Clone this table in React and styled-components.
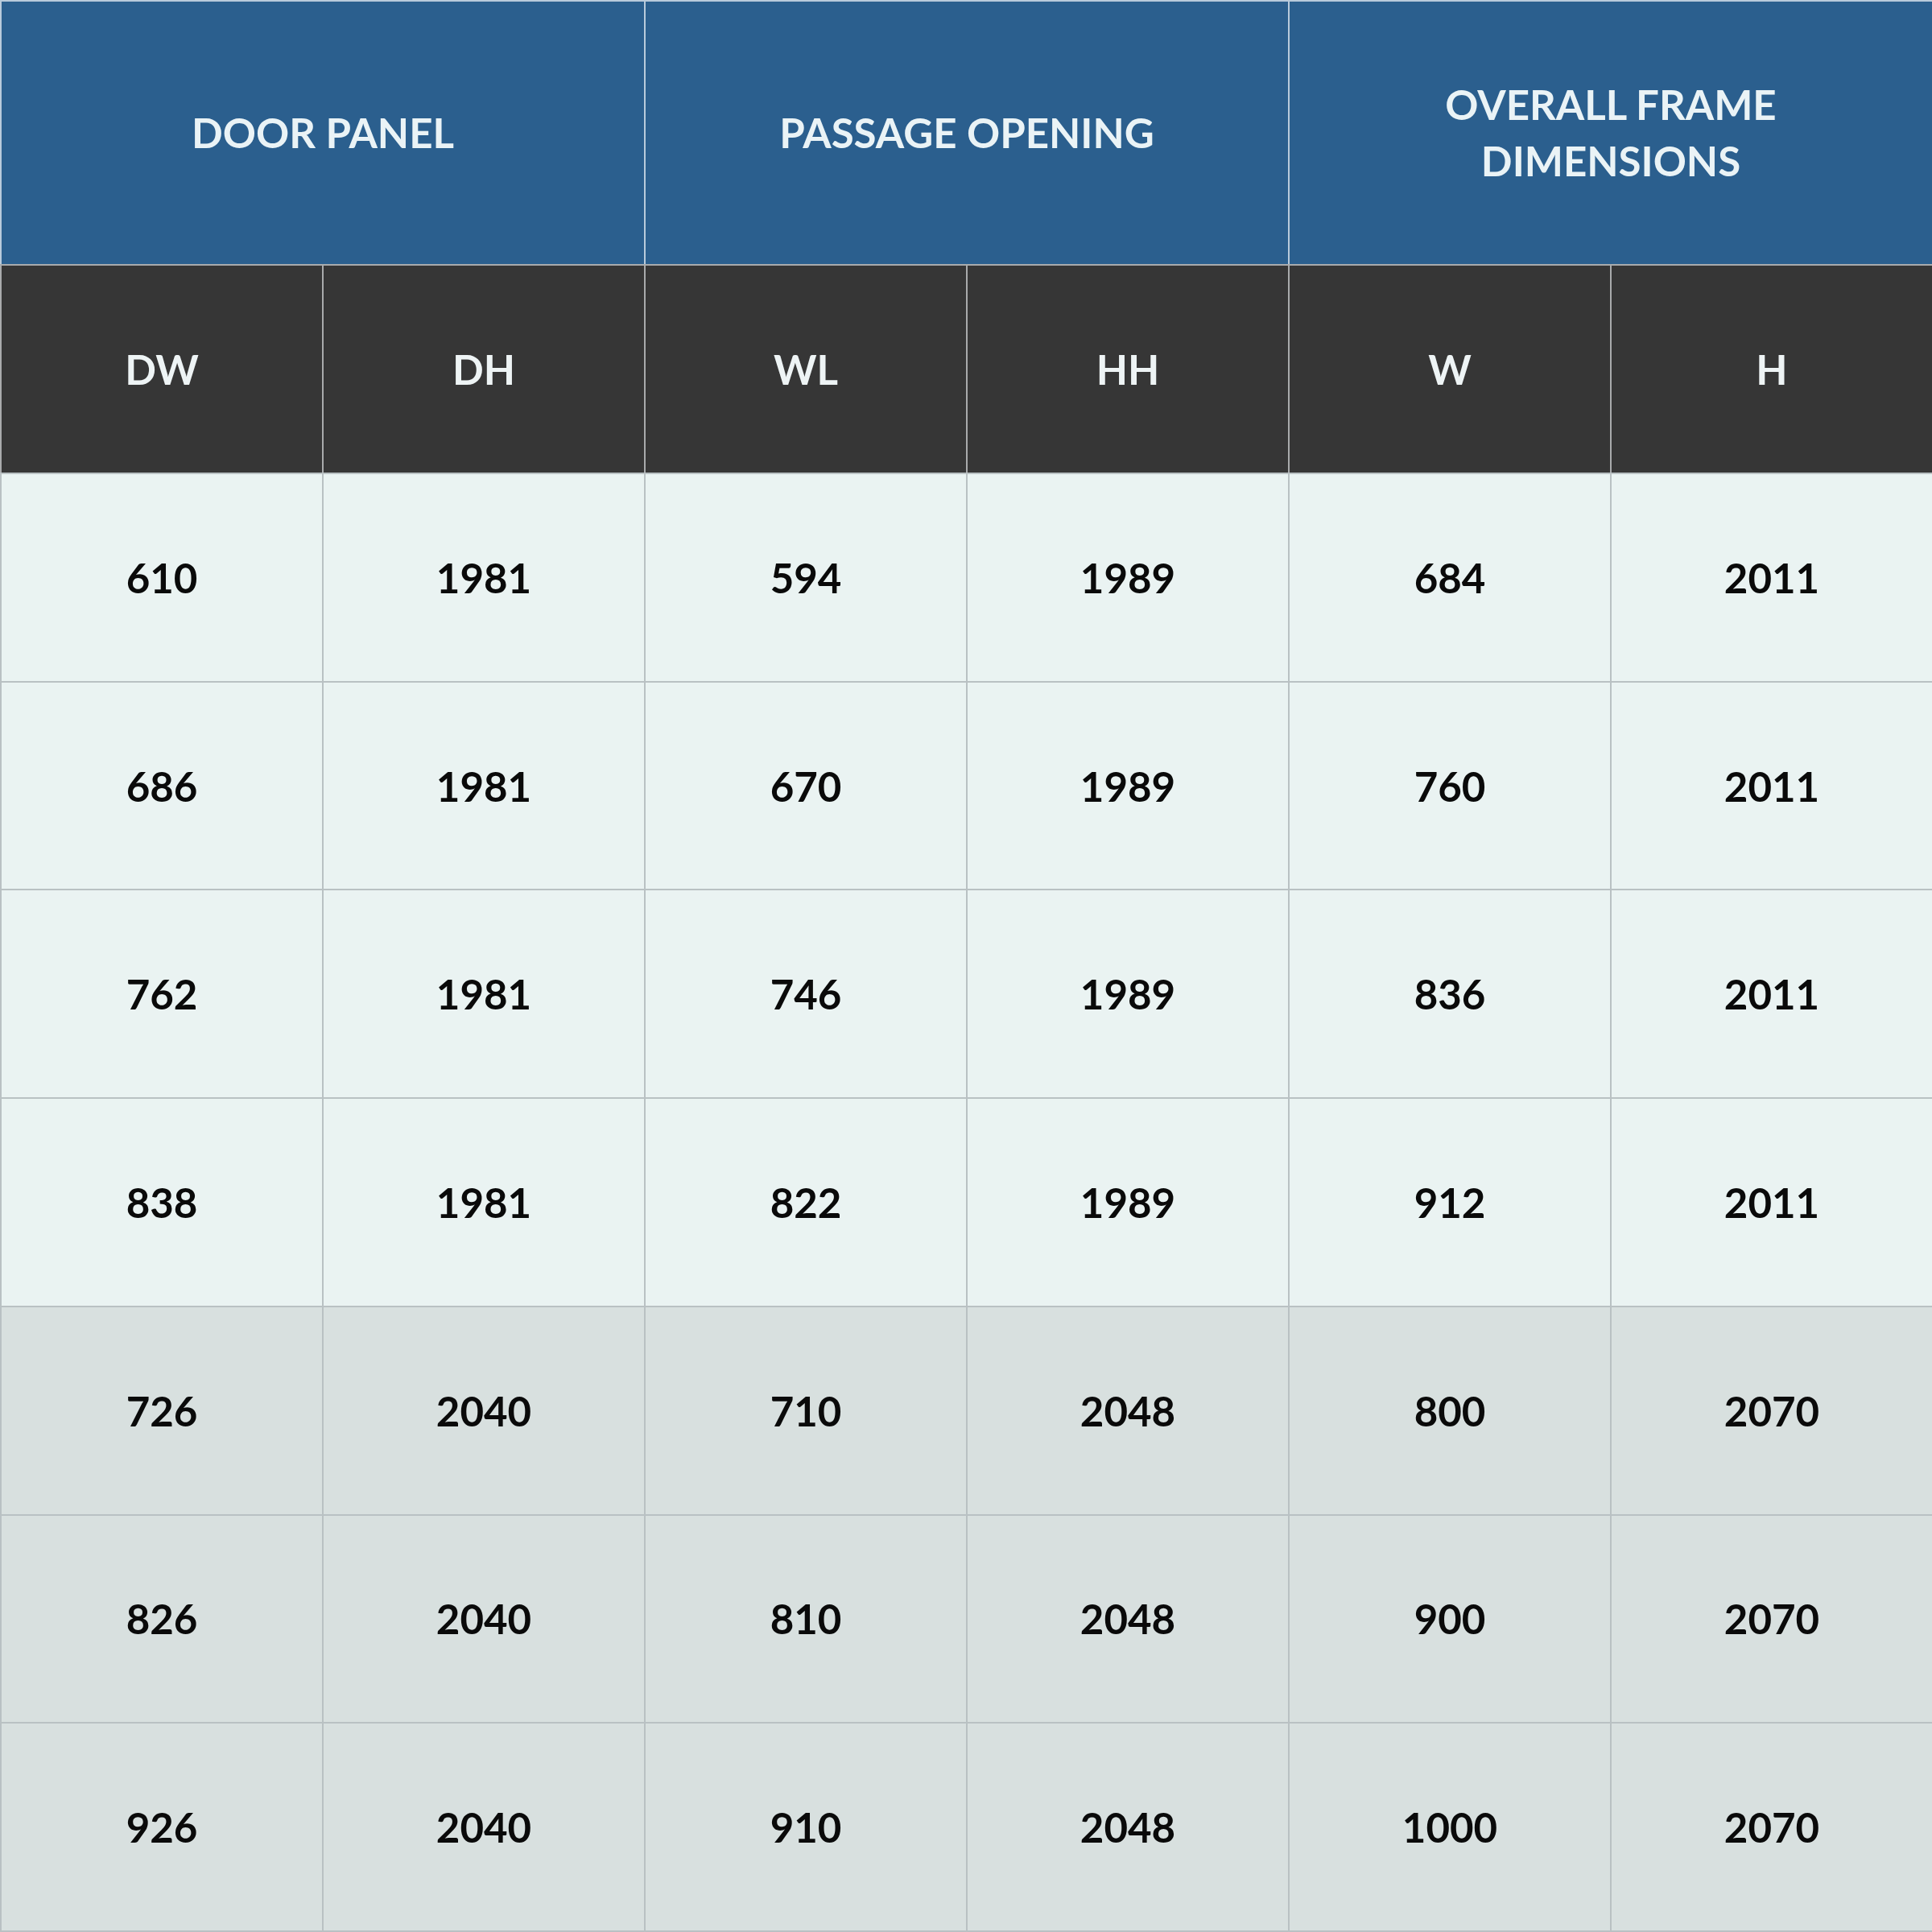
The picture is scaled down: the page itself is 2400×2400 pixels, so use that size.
import React from 'react';
import styled, { createGlobalStyle } from 'styled-components';

const GlobalStyle = createGlobalStyle`
    html, body {
        margin: 0;
        padding: 0;
        background: #ffffff;
    }
`

const Table = styled.div`
    width: 2400px;
    height: 2400px;
    display: grid;
    grid-template-columns: repeat(6, 1fr);
    grid-template-rows: 328px 259px repeat(7, 1fr);
    font-family: Lato, "Open Sans", sans-serif;
    font-weight: 700;
    font-size: 51px;
    box-sizing: border-box;
    border-bottom: 2px solid #b9c1c3;
`

const Cell = styled.div`
    display: flex;
    align-items: center;
    justify-content: center;
    text-align: center;
    box-sizing: border-box;
    border-left: 2px solid ${props => props.line};
    border-top: 2px solid ${props => props.line};
`

const GroupCell = styled(Cell)`
    grid-column: span 2;
    background: #2b5f8e;
    color: #eaf3f6;
    line-height: 70px;
    padding: 0 40px;
`

const SubCell = styled(Cell)`
    background: #363636;
    color: #eef4f5;
`

const DataCell = styled(Cell)`
    background: ${props => props.shade ? '#d8e0df' : '#eaf3f2'};
    color: #0a0a0a;
`

const groups = ['DOOR PANEL', 'PASSAGE OPENING', 'OVERALL FRAME DIMENSIONS'];
const columns = ['DW', 'DH', 'WL', 'HH', 'W', 'H'];

const rows = [
    ['610', '1981', '594', '1989', '684', '2011'],
    ['686', '1981', '670', '1989', '760', '2011'],
    ['762', '1981', '746', '1989', '836', '2011'],
    ['838', '1981', '822', '1989', '912', '2011'],
    ['726', '2040', '710', '2048', '800', '2070'],
    ['826', '2040', '810', '2048', '900', '2070'],
    ['926', '2040', '910', '2048', '1000', '2070'],
];

const App = () => (
    <>
        <GlobalStyle />
        <Table>
            {groups.map(g => (
                <GroupCell key={g} line="#b9cbdb">
                    {g === 'OVERALL FRAME DIMENSIONS' ? <span>OVERALL FRAME<br />DIMENSIONS</span> : g}
                </GroupCell>
            ))}
            {columns.map(c => (
                <SubCell key={c} line="#a9abac">{c}</SubCell>
            ))}
            {rows.map((r, ri) => r.map((v, ci) => (
                <DataCell key={ri + '-' + ci} line="#b9c1c3" shade={ri >= 4}>
                    {v}
                </DataCell>
            )))}
        </Table>
    </>
);

export default App;
